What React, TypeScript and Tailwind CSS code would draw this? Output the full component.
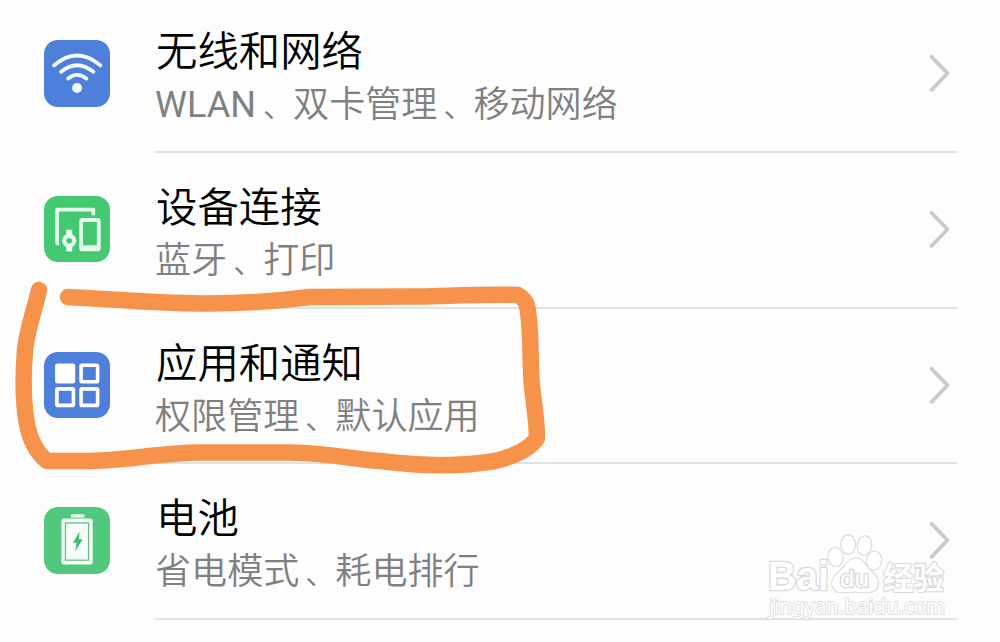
import type { ReactNode } from 'react';

type SettingsItem = {
  title: string;
  summary: string[];
  tileClass: string;
  icon: ReactNode;
};

function WifiIcon() {
  return (
    <svg viewBox="0 0 66 66" className="w-full h-full" fill="none" stroke="#f4fbff" strokeWidth="3.8" strokeLinecap="round">
      <path d="M10 25.2Q32.7 5.6 56 25.2" />
      <path d="M17 31.6Q32.7 18.6 49 31.6" />
      <path d="M24 38.2Q32.7 31 42 38.2" />
      <circle cx="32.8" cy="47.7" r="4.9" fill="#f4fbff" stroke="none" />
    </svg>
  );
}

function DevicesIcon() {
  return (
    <svg viewBox="0 0 66 66" className="w-full h-full" fill="none" stroke="#e3fceb" strokeWidth="3.6">
      <path d="M15 47H13V13.5H49V19" strokeLinejoin="round" />
      <path d="M25 33.6V39M25 50V55" strokeWidth="6" />
      <circle cx="25" cy="44.4" r="4.9" strokeWidth="4.2" />
      <rect x="36.8" y="23.8" width="17.6" height="29.2" rx="1.5" strokeWidth="3.8" />
      <path d="M37 51H54" strokeWidth="4" />
    </svg>
  );
}

function AppsIcon() {
  return (
    <svg viewBox="0 0 66 66" className="w-full h-full" fill="none" stroke="#fff" strokeWidth="3.6">
      <rect x="11" y="11.3" width="20" height="20" rx="2.5" fill="#fff" stroke="none" />
      <rect x="36.8" y="13.1" width="16.4" height="16.4" rx="1" />
      <rect x="12.8" y="36.6" width="16.4" height="16.4" rx="1" />
      <rect x="36.8" y="36.6" width="16.4" height="16.4" rx="1" />
    </svg>
  );
}

function BatteryIcon() {
  return (
    <svg viewBox="0 0 66 66" className="w-full h-full" fill="none">
      <rect x="26.7" y="7.3" width="13.3" height="3" rx="1" fill="#edfff3" />
      <rect x="17.3" y="11.5" width="31" height="45.6" rx="2.5" fill="#f5fff8" />
      <rect x="21.3" y="15.8" width="23" height="37" stroke="#74b88c" strokeWidth="1.3" />
      <path d="M35.3 24.5L28.6 35.6H32.2L31 43.8L38.4 32H34.6Z" fill="#45bd71" />
    </svg>
  );
}

function Chevron() {
  return (
    <svg viewBox="0 0 24 40" className="w-6 h-10 shrink-0" fill="none" stroke="#cacaca" strokeWidth="3.8" strokeLinecap="round" strokeLinejoin="round">
      <path d="M3.5 3.8L19.5 20.3L3.5 37" />
    </svg>
  );
}

const ITEMS: SettingsItem[] = [
  { title: '无线和网络', summary: ['WLAN', '双卡管理', '移动网络'], tileClass: 'bg-[#4e7fdb]', icon: <WifiIcon /> },
  { title: '设备连接', summary: ['蓝牙', '打印'], tileClass: 'bg-[#45c872]', icon: <DevicesIcon /> },
  { title: '应用和通知', summary: ['权限管理', '默认应用'], tileClass: 'bg-[#4e7fdb]', icon: <AppsIcon /> },
  { title: '电池', summary: ['省电模式', '耗电排行'], tileClass: 'bg-[#50c97d]', icon: <BatteryIcon /> },
];

function SettingsRow({ title, summary, tileClass, icon }: SettingsItem) {
  return (
    <li className="flex h-[155.8px] pl-[43.5px] pr-[43px]">
      <div className={`w-[66.5px] h-[66.5px] mt-[43px] mr-[45px] shrink-0 overflow-hidden rounded-[14px] ${tileClass}`}>
        {icon}
      </div>
      <div className="flex flex-1 justify-between border-b-2 border-[#e2e2e2]">
        <div className="pt-[29px] whitespace-nowrap">
          <h2 className="pl-px text-[41.4px] leading-[52px] font-[350] text-black">{title}</h2>
          <p className="text-[36.1px] leading-[54px] font-[350] text-[#808080]">
            {summary.map((part, i) => (
              <span key={part}>
                {i > 0 && <span className="pl-[6px] text-[30px]">、</span>}
                {/^[A-Z]+$/.test(part) ? <span className="pr-px font-normal">{part}</span> : part}
              </span>
            ))}
          </p>
        </div>
        <div className="pt-[56px] pr-[5px]">
          <Chevron />
        </div>
      </div>
    </li>
  );
}

// Hand-drawn marker loop around the apps entry
function MarkerStroke() {
  return (
    <svg
      viewBox="0 0 1000 642"
      className="absolute inset-0 w-full h-full pointer-events-none"
      fill="none"
      stroke="#f6924a"
      strokeWidth="16.5"
      strokeLinecap="round"
      strokeLinejoin="round"
    >
      <path d="M39 290C34 312 27 330 25 350C23 375 23 403 27 424C30 440 37 453 47 461H90C130 460 160 453 200 452.5H290C330 453 350 459 380 461C420 466 460 467 495 461C515 456 530 449 537 438C537 415 531 390 531 370C530 345 531 325 527 306C526 301 523 298 518 295C480 294 450 296 420 296.5L310 297C270 302 240 304 200 303.5C150 303 110 299 68 297" />
    </svg>
  );
}

function Watermark() {
  return (
    <svg
      viewBox="0 0 190 90"
      className="absolute left-[762px] top-[532px] w-[190px] h-[90px]"
      fill="#fff"
      stroke="#d9d9d9"
      strokeWidth="2.2"
      strokeLinejoin="round"
      fontFamily="'Liberation Sans', 'Noto Sans CJK SC', sans-serif"
      fontWeight="700"
      style={{ paintOrder: 'stroke' }}
    >
      <text x="6" y="58" fontSize="40" textLength="61" lengthAdjust="spacingAndGlyphs" strokeWidth="2.6">Bai</text>
      <ellipse cx="73.5" cy="25" rx="7" ry="9" transform="rotate(-8 73.5 25)" />
      <ellipse cx="86.2" cy="12.5" rx="6.8" ry="9.3" />
      <ellipse cx="102.4" cy="13.5" rx="6.8" ry="9.2" transform="rotate(10 102.4 13.5)" />
      <ellipse cx="112" cy="28.7" rx="7.2" ry="9" transform="rotate(8 112 28.7)" />
      <path d="M93 26.5C86 27 84 34 78 39C73 43 69 48 70.5 54C73 62 81 60.5 93 59.5C105 60.5 114 62 116 52C117 45 110 41 106 36C102 31 100 26.5 93 26.5Z" />
      <text x="78" y="55" fontSize="24" textLength="29" lengthAdjust="spacingAndGlyphs" fontWeight="400" strokeWidth="2.6">du</text>
      <text x="121" y="56.5" fontSize="31" textLength="61" lengthAdjust="spacingAndGlyphs" fontFamily="'Noto Sans CJK SC', sans-serif">经验</text>
      <text x="7" y="82" fontSize="21" textLength="176" lengthAdjust="spacingAndGlyphs" fontFamily="'Noto Sans', sans-serif" fontWeight="400" strokeWidth="1.7">jingyan.baidu.com</text>
    </svg>
  );
}

export default function App() {
  return (
    <main className="relative w-[1000px] h-[642px] overflow-hidden bg-[#fdfdfd] font-[Roboto,'Noto_Sans_CJK_SC',sans-serif]">
      <ul className="-mt-[3px]">
        {ITEMS.map((item) => (
          <SettingsRow key={item.title} {...item} />
        ))}
      </ul>
      <MarkerStroke />
      <Watermark />
    </main>
  );
}
